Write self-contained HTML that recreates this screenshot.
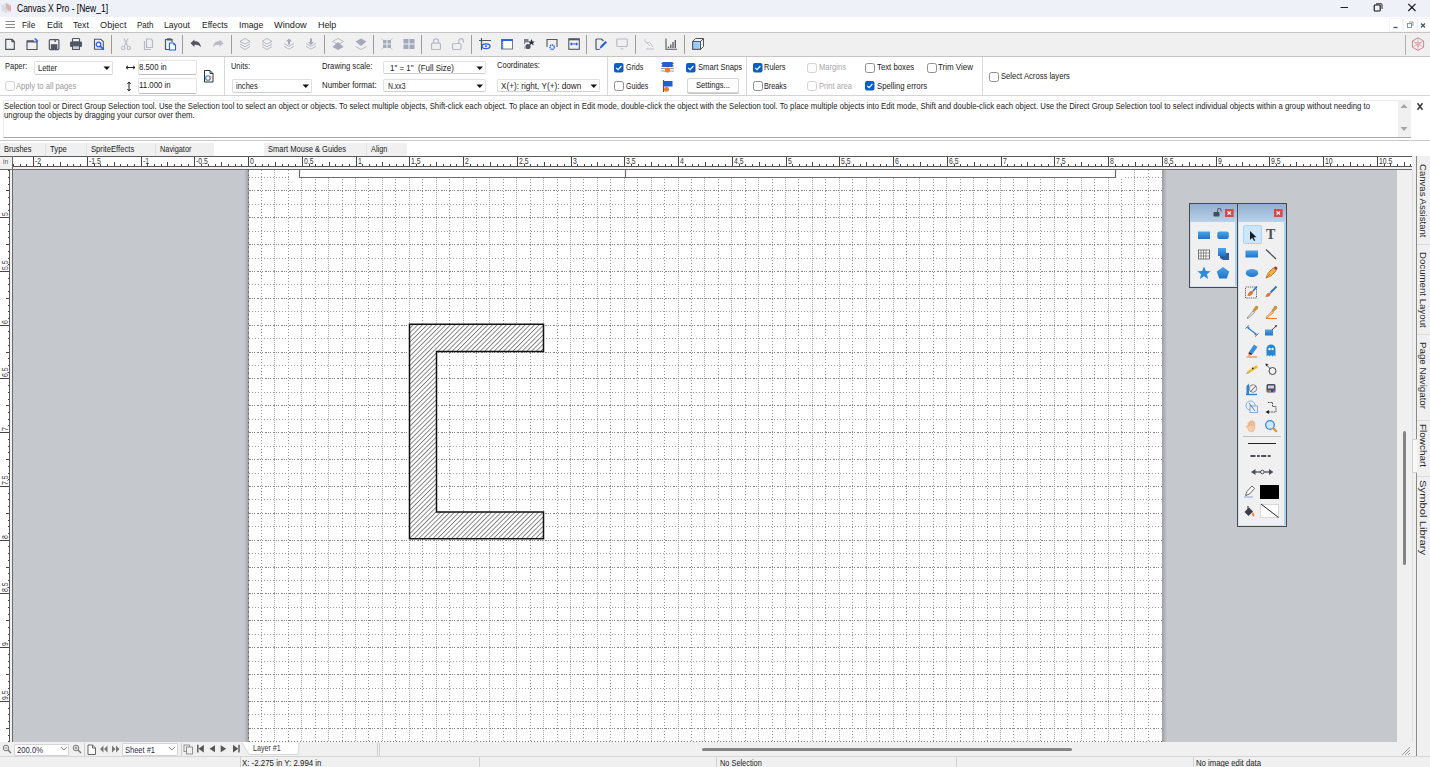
<!DOCTYPE html><html><head><meta charset="utf-8"><style>
html,body{margin:0;padding:0;width:1430px;height:767px;overflow:hidden;background:#fff;position:relative}
.t{position:absolute;white-space:pre;line-height:1;transform-origin:0 0}
svg{position:absolute;overflow:visible}
</style></head><body>
<div style="position:absolute;left:0px;top:0px;width:1430px;height:17px;background:#eef2f8;"></div>
<div class="t" style="left:17px;top:4.17px;font-size:10.2px;color:#000;font-family:'Liberation Sans';font-weight:normal;transform:scaleX(0.8327);">Canvas X Pro - [New_1]</div>
<div style="position:absolute;left:0px;top:17px;width:1430px;height:15px;background:#ffffff;"></div>
<div class="t" style="left:22px;top:19.96px;font-size:9.5px;color:#1a1a1a;font-family:'Liberation Sans';font-weight:normal;transform:scaleX(0.8686);">File</div>
<div class="t" style="left:46.6px;top:19.96px;font-size:9.5px;color:#1a1a1a;font-family:'Liberation Sans';font-weight:normal;transform:scaleX(0.9405);">Edit</div>
<div class="t" style="left:73px;top:19.96px;font-size:9.5px;color:#1a1a1a;font-family:'Liberation Sans';font-weight:normal;transform:scaleX(0.9061);">Text</div>
<div class="t" style="left:99.5px;top:19.96px;font-size:9.5px;color:#1a1a1a;font-family:'Liberation Sans';font-weight:normal;transform:scaleX(0.9647);">Object</div>
<div class="t" style="left:136.6px;top:19.96px;font-size:9.5px;color:#1a1a1a;font-family:'Liberation Sans';font-weight:normal;transform:scaleX(0.8390);">Path</div>
<div class="t" style="left:164.4px;top:19.96px;font-size:9.5px;color:#1a1a1a;font-family:'Liberation Sans';font-weight:normal;transform:scaleX(0.9043);">Layout</div>
<div class="t" style="left:201.6px;top:19.96px;font-size:9.5px;color:#1a1a1a;font-family:'Liberation Sans';font-weight:normal;transform:scaleX(0.8935);">Effects</div>
<div class="t" style="left:238.7px;top:19.96px;font-size:9.5px;color:#1a1a1a;font-family:'Liberation Sans';font-weight:normal;transform:scaleX(0.9202);">Image</div>
<div class="t" style="left:274px;top:19.96px;font-size:9.5px;color:#1a1a1a;font-family:'Liberation Sans';font-weight:normal;transform:scaleX(0.9675);">Window</div>
<div class="t" style="left:318px;top:19.96px;font-size:9.5px;color:#1a1a1a;font-family:'Liberation Sans';font-weight:normal;transform:scaleX(0.9362);">Help</div>
<div style="position:absolute;left:0px;top:32px;width:1430px;height:1px;background:#c4c4c4;"></div>
<div style="position:absolute;left:0px;top:33px;width:1430px;height:23px;background:#f0f0f0;"></div>
<div style="position:absolute;left:0px;top:56px;width:1430px;height:1px;background:#c4c4c4;"></div>
<div style="position:absolute;left:0px;top:57px;width:1430px;height:38px;background:#ffffff;"></div>
<div style="position:absolute;left:0px;top:95px;width:1430px;height:1px;background:#d4d4d4;"></div>
<div style="position:absolute;left:0px;top:96px;width:1430px;height:45px;background:#ffffff;"></div>
<div style="position:absolute;left:3px;top:99.5px;width:1408px;height:38px;background:#ffffff;box-sizing:border-box;border-left:1px solid #ececec;border-top:1px solid #ececec;border-bottom:1px solid #a9a9a9"></div>
<div style="position:absolute;left:0px;top:140px;width:1430px;height:1px;background:#c8c8c8;"></div>
<div style="position:absolute;left:0px;top:143px;width:214px;height:13px;background:#f0f0f0;"></div>
<div style="position:absolute;left:264px;top:143px;width:143px;height:13px;background:#f0f0f0;"></div>
<div style="position:absolute;left:0px;top:156px;width:1412px;height:13px;background:#ffffff;"></div>
<div style="position:absolute;left:0px;top:169px;width:1412px;height:573px;background:#c4c7cc;"></div>
<div style="position:absolute;left:0px;top:169px;width:10px;height:573px;background:#ffffff;"></div>
<div style="position:absolute;left:249px;top:170px;width:913px;height:572px;background:#ffffff;"></div>
<div style="position:absolute;left:1397px;top:156px;width:15px;height:586px;background:#f0f0f0;"></div>
<div style="position:absolute;left:1412px;top:156px;width:18px;height:600px;background:#f0f0f0;"></div>
<div style="position:absolute;left:1416px;top:156px;width:1px;height:600px;background:#8a8a8a;"></div>
<div style="position:absolute;left:0px;top:742px;width:1412px;height:14px;background:#f0f0f0;"></div>
<div style="position:absolute;left:0px;top:756px;width:1430px;height:11px;background:#f0f0f0;"></div>
<div style="position:absolute;left:0px;top:756px;width:1430px;height:1px;background:#d0d0d0;"></div>
<div style="position:absolute;left:13px;top:170px;width:1384px;height:572px;background:#c5c8cd;"></div>
<div style="position:absolute;left:244px;top:170px;width:5px;height:572px;background:linear-gradient(90deg,#c5c8cd,#9a9da2);"></div>
<div style="position:absolute;left:1162px;top:170px;width:5px;height:572px;background:linear-gradient(90deg,#9a9da2,#c5c8cd);"></div>
<div style="position:absolute;left:249px;top:170px;width:913px;height:572px;background:#ffffff;"></div>
<svg style="left:0;top:0" width="1430" height="767"><line x1="261.5" y1="170" x2="261.5" y2="742" stroke="#929292" stroke-dasharray="1 2"/><line x1="274.5" y1="170" x2="274.5" y2="742" stroke="#a6a6a6" stroke-dasharray="1 1"/><line x1="288.5" y1="170" x2="288.5" y2="742" stroke="#929292" stroke-dasharray="1 2"/><line x1="301.5" y1="170" x2="301.5" y2="742" stroke="#a6a6a6" stroke-dasharray="1 1"/><line x1="315.5" y1="170" x2="315.5" y2="742" stroke="#929292" stroke-dasharray="1 2"/><line x1="328.5" y1="170" x2="328.5" y2="742" stroke="#a6a6a6" stroke-dasharray="1 1"/><line x1="342.5" y1="170" x2="342.5" y2="742" stroke="#929292" stroke-dasharray="1 2"/><line x1="355.5" y1="170" x2="355.5" y2="742" stroke="#a6a6a6" stroke-dasharray="1 1"/><line x1="368.5" y1="170" x2="368.5" y2="742" stroke="#929292" stroke-dasharray="1 2"/><line x1="382.5" y1="170" x2="382.5" y2="742" stroke="#a6a6a6" stroke-dasharray="1 1"/><line x1="395.5" y1="170" x2="395.5" y2="742" stroke="#929292" stroke-dasharray="1 2"/><line x1="409.5" y1="170" x2="409.5" y2="742" stroke="#a6a6a6" stroke-dasharray="1 1"/><line x1="422.5" y1="170" x2="422.5" y2="742" stroke="#929292" stroke-dasharray="1 2"/><line x1="436.5" y1="170" x2="436.5" y2="742" stroke="#a6a6a6" stroke-dasharray="1 1"/><line x1="449.5" y1="170" x2="449.5" y2="742" stroke="#929292" stroke-dasharray="1 2"/><line x1="463.5" y1="170" x2="463.5" y2="742" stroke="#a6a6a6" stroke-dasharray="1 1"/><line x1="476.5" y1="170" x2="476.5" y2="742" stroke="#929292" stroke-dasharray="1 2"/><line x1="489.5" y1="170" x2="489.5" y2="742" stroke="#a6a6a6" stroke-dasharray="1 1"/><line x1="503.5" y1="170" x2="503.5" y2="742" stroke="#929292" stroke-dasharray="1 2"/><line x1="516.5" y1="170" x2="516.5" y2="742" stroke="#a6a6a6" stroke-dasharray="1 1"/><line x1="530.5" y1="170" x2="530.5" y2="742" stroke="#929292" stroke-dasharray="1 2"/><line x1="543.5" y1="170" x2="543.5" y2="742" stroke="#a6a6a6" stroke-dasharray="1 1"/><line x1="557.5" y1="170" x2="557.5" y2="742" stroke="#929292" stroke-dasharray="1 2"/><line x1="570.5" y1="170" x2="570.5" y2="742" stroke="#a6a6a6" stroke-dasharray="1 1"/><line x1="583.5" y1="170" x2="583.5" y2="742" stroke="#929292" stroke-dasharray="1 2"/><line x1="597.5" y1="170" x2="597.5" y2="742" stroke="#a6a6a6" stroke-dasharray="1 1"/><line x1="610.5" y1="170" x2="610.5" y2="742" stroke="#929292" stroke-dasharray="1 2"/><line x1="624.5" y1="170" x2="624.5" y2="742" stroke="#a6a6a6" stroke-dasharray="1 1"/><line x1="637.5" y1="170" x2="637.5" y2="742" stroke="#929292" stroke-dasharray="1 2"/><line x1="651.5" y1="170" x2="651.5" y2="742" stroke="#a6a6a6" stroke-dasharray="1 1"/><line x1="664.5" y1="170" x2="664.5" y2="742" stroke="#929292" stroke-dasharray="1 2"/><line x1="678.5" y1="170" x2="678.5" y2="742" stroke="#a6a6a6" stroke-dasharray="1 1"/><line x1="691.5" y1="170" x2="691.5" y2="742" stroke="#929292" stroke-dasharray="1 2"/><line x1="704.5" y1="170" x2="704.5" y2="742" stroke="#a6a6a6" stroke-dasharray="1 1"/><line x1="718.5" y1="170" x2="718.5" y2="742" stroke="#929292" stroke-dasharray="1 2"/><line x1="731.5" y1="170" x2="731.5" y2="742" stroke="#a6a6a6" stroke-dasharray="1 1"/><line x1="745.5" y1="170" x2="745.5" y2="742" stroke="#929292" stroke-dasharray="1 2"/><line x1="758.5" y1="170" x2="758.5" y2="742" stroke="#a6a6a6" stroke-dasharray="1 1"/><line x1="772.5" y1="170" x2="772.5" y2="742" stroke="#929292" stroke-dasharray="1 2"/><line x1="785.5" y1="170" x2="785.5" y2="742" stroke="#a6a6a6" stroke-dasharray="1 1"/><line x1="798.5" y1="170" x2="798.5" y2="742" stroke="#929292" stroke-dasharray="1 2"/><line x1="812.5" y1="170" x2="812.5" y2="742" stroke="#a6a6a6" stroke-dasharray="1 1"/><line x1="825.5" y1="170" x2="825.5" y2="742" stroke="#929292" stroke-dasharray="1 2"/><line x1="839.5" y1="170" x2="839.5" y2="742" stroke="#a6a6a6" stroke-dasharray="1 1"/><line x1="852.5" y1="170" x2="852.5" y2="742" stroke="#929292" stroke-dasharray="1 2"/><line x1="866.5" y1="170" x2="866.5" y2="742" stroke="#a6a6a6" stroke-dasharray="1 1"/><line x1="879.5" y1="170" x2="879.5" y2="742" stroke="#929292" stroke-dasharray="1 2"/><line x1="893.5" y1="170" x2="893.5" y2="742" stroke="#a6a6a6" stroke-dasharray="1 1"/><line x1="906.5" y1="170" x2="906.5" y2="742" stroke="#929292" stroke-dasharray="1 2"/><line x1="919.5" y1="170" x2="919.5" y2="742" stroke="#a6a6a6" stroke-dasharray="1 1"/><line x1="933.5" y1="170" x2="933.5" y2="742" stroke="#929292" stroke-dasharray="1 2"/><line x1="946.5" y1="170" x2="946.5" y2="742" stroke="#a6a6a6" stroke-dasharray="1 1"/><line x1="960.5" y1="170" x2="960.5" y2="742" stroke="#929292" stroke-dasharray="1 2"/><line x1="973.5" y1="170" x2="973.5" y2="742" stroke="#a6a6a6" stroke-dasharray="1 1"/><line x1="987.5" y1="170" x2="987.5" y2="742" stroke="#929292" stroke-dasharray="1 2"/><line x1="1000.5" y1="170" x2="1000.5" y2="742" stroke="#a6a6a6" stroke-dasharray="1 1"/><line x1="1013.5" y1="170" x2="1013.5" y2="742" stroke="#929292" stroke-dasharray="1 2"/><line x1="1027.5" y1="170" x2="1027.5" y2="742" stroke="#a6a6a6" stroke-dasharray="1 1"/><line x1="1040.5" y1="170" x2="1040.5" y2="742" stroke="#929292" stroke-dasharray="1 2"/><line x1="1054.5" y1="170" x2="1054.5" y2="742" stroke="#a6a6a6" stroke-dasharray="1 1"/><line x1="1067.5" y1="170" x2="1067.5" y2="742" stroke="#929292" stroke-dasharray="1 2"/><line x1="1081.5" y1="170" x2="1081.5" y2="742" stroke="#a6a6a6" stroke-dasharray="1 1"/><line x1="1094.5" y1="170" x2="1094.5" y2="742" stroke="#929292" stroke-dasharray="1 2"/><line x1="1108.5" y1="170" x2="1108.5" y2="742" stroke="#a6a6a6" stroke-dasharray="1 1"/><line x1="1121.5" y1="170" x2="1121.5" y2="742" stroke="#929292" stroke-dasharray="1 2"/><line x1="1134.5" y1="170" x2="1134.5" y2="742" stroke="#a6a6a6" stroke-dasharray="1 1"/><line x1="1148.5" y1="170" x2="1148.5" y2="742" stroke="#929292" stroke-dasharray="1 2"/><line x1="249" y1="177.5" x2="1162" y2="177.5" stroke="#9c9c9c" stroke-dasharray="1 2"/><line x1="249" y1="190.5" x2="1162" y2="190.5" stroke="#888888" stroke-dasharray="2 1 1 1 1 2"/><line x1="249" y1="204.5" x2="1162" y2="204.5" stroke="#9c9c9c" stroke-dasharray="1 2"/><line x1="249" y1="217.5" x2="1162" y2="217.5" stroke="#888888" stroke-dasharray="2 1 1 1 1 2"/><line x1="249" y1="231.5" x2="1162" y2="231.5" stroke="#9c9c9c" stroke-dasharray="1 2"/><line x1="249" y1="244.5" x2="1162" y2="244.5" stroke="#888888" stroke-dasharray="2 1 1 1 1 2"/><line x1="249" y1="258.5" x2="1162" y2="258.5" stroke="#9c9c9c" stroke-dasharray="1 2"/><line x1="249" y1="271.5" x2="1162" y2="271.5" stroke="#888888" stroke-dasharray="2 1 1 1 1 2"/><line x1="249" y1="284.5" x2="1162" y2="284.5" stroke="#9c9c9c" stroke-dasharray="1 2"/><line x1="249" y1="298.5" x2="1162" y2="298.5" stroke="#888888" stroke-dasharray="2 1 1 1 1 2"/><line x1="249" y1="311.5" x2="1162" y2="311.5" stroke="#9c9c9c" stroke-dasharray="1 2"/><line x1="249" y1="325.5" x2="1162" y2="325.5" stroke="#888888" stroke-dasharray="2 1 1 1 1 2"/><line x1="249" y1="338.5" x2="1162" y2="338.5" stroke="#9c9c9c" stroke-dasharray="1 2"/><line x1="249" y1="352.5" x2="1162" y2="352.5" stroke="#888888" stroke-dasharray="2 1 1 1 1 2"/><line x1="249" y1="365.5" x2="1162" y2="365.5" stroke="#9c9c9c" stroke-dasharray="1 2"/><line x1="249" y1="378.5" x2="1162" y2="378.5" stroke="#888888" stroke-dasharray="2 1 1 1 1 2"/><line x1="249" y1="392.5" x2="1162" y2="392.5" stroke="#9c9c9c" stroke-dasharray="1 2"/><line x1="249" y1="405.5" x2="1162" y2="405.5" stroke="#888888" stroke-dasharray="2 1 1 1 1 2"/><line x1="249" y1="419.5" x2="1162" y2="419.5" stroke="#9c9c9c" stroke-dasharray="1 2"/><line x1="249" y1="432.5" x2="1162" y2="432.5" stroke="#888888" stroke-dasharray="2 1 1 1 1 2"/><line x1="249" y1="446.5" x2="1162" y2="446.5" stroke="#9c9c9c" stroke-dasharray="1 2"/><line x1="249" y1="459.5" x2="1162" y2="459.5" stroke="#888888" stroke-dasharray="2 1 1 1 1 2"/><line x1="249" y1="473.5" x2="1162" y2="473.5" stroke="#9c9c9c" stroke-dasharray="1 2"/><line x1="249" y1="486.5" x2="1162" y2="486.5" stroke="#888888" stroke-dasharray="2 1 1 1 1 2"/><line x1="249" y1="499.5" x2="1162" y2="499.5" stroke="#9c9c9c" stroke-dasharray="1 2"/><line x1="249" y1="513.5" x2="1162" y2="513.5" stroke="#888888" stroke-dasharray="2 1 1 1 1 2"/><line x1="249" y1="526.5" x2="1162" y2="526.5" stroke="#9c9c9c" stroke-dasharray="1 2"/><line x1="249" y1="540.5" x2="1162" y2="540.5" stroke="#888888" stroke-dasharray="2 1 1 1 1 2"/><line x1="249" y1="553.5" x2="1162" y2="553.5" stroke="#9c9c9c" stroke-dasharray="1 2"/><line x1="249" y1="567.5" x2="1162" y2="567.5" stroke="#888888" stroke-dasharray="2 1 1 1 1 2"/><line x1="249" y1="580.5" x2="1162" y2="580.5" stroke="#9c9c9c" stroke-dasharray="1 2"/><line x1="249" y1="593.5" x2="1162" y2="593.5" stroke="#888888" stroke-dasharray="2 1 1 1 1 2"/><line x1="249" y1="607.5" x2="1162" y2="607.5" stroke="#9c9c9c" stroke-dasharray="1 2"/><line x1="249" y1="620.5" x2="1162" y2="620.5" stroke="#888888" stroke-dasharray="2 1 1 1 1 2"/><line x1="249" y1="634.5" x2="1162" y2="634.5" stroke="#9c9c9c" stroke-dasharray="1 2"/><line x1="249" y1="647.5" x2="1162" y2="647.5" stroke="#888888" stroke-dasharray="2 1 1 1 1 2"/><line x1="249" y1="661.5" x2="1162" y2="661.5" stroke="#9c9c9c" stroke-dasharray="1 2"/><line x1="249" y1="674.5" x2="1162" y2="674.5" stroke="#888888" stroke-dasharray="2 1 1 1 1 2"/><line x1="249" y1="688.5" x2="1162" y2="688.5" stroke="#9c9c9c" stroke-dasharray="1 2"/><line x1="249" y1="701.5" x2="1162" y2="701.5" stroke="#888888" stroke-dasharray="2 1 1 1 1 2"/><line x1="249" y1="714.5" x2="1162" y2="714.5" stroke="#9c9c9c" stroke-dasharray="1 2"/><line x1="249" y1="728.5" x2="1162" y2="728.5" stroke="#888888" stroke-dasharray="2 1 1 1 1 2"/><line x1="249" y1="741.5" x2="1162" y2="741.5" stroke="#9c9c9c" stroke-dasharray="1 2"/></svg>
<div style="position:absolute;left:289px;top:170px;width:836px;height:8px;background:#ffffff;"></div>
<svg style="left:0;top:0" width="1430" height="767"><line x1="248.5" y1="170" x2="248.5" y2="742" stroke="#666" stroke-dasharray="1.5 3"/></svg>
<svg style="left:0;top:0" width="1430" height="767"><path d="M299.5 170 V177.5 H1115.5 V170 M625.5 170 V177" fill="none" stroke="#6e6e6e" stroke-width="1.2"/></svg>
<svg style="left:0;top:0" width="1430" height="767"><defs><pattern id="hatch" patternUnits="userSpaceOnUse" width="3.3" height="3.3" patternTransform="rotate(45)"><rect width="3.3" height="3.3" fill="#fff"/><line x1="0.5" y1="0" x2="0.5" y2="3.3" stroke="#6a6a6a" stroke-width="0.8"/></pattern></defs>
<path d="M409.5 324.3 H543.5 V351.5 H436.5 V512 H543.5 V538.8 H409.5 Z" fill="url(#hatch)" stroke="#111" stroke-width="1.5"/></svg>
<div style="position:absolute;left:0px;top:156px;width:1412px;height:1px;background:#5a5a5a;"></div>
<div style="position:absolute;left:0px;top:157px;width:13px;height:12px;background:#f0f0f0;"></div>
<div class="t" style="left:3px;top:159.00px;font-size:6.5px;color:#555;font-family:'Liberation Sans';font-weight:normal;">in</div>
<div style="position:absolute;left:12px;top:156px;width:1px;height:611px;background:#6a6a6a;"></div>
<div style="position:absolute;left:13px;top:157px;width:1399px;height:10px;background:#ffffff;"></div>
<div style="position:absolute;left:13px;top:166px;width:1399px;height:1px;background:#555555;"></div>
<div style="position:absolute;left:13px;top:167px;width:1399px;height:2px;background:#f0f0f0;"></div>
<div style="position:absolute;left:0px;top:169px;width:1412px;height:1px;background:#6e6e6e;"></div>
<svg style="left:0;top:0" width="1430" height="767"><path d="M13.5 164V166M20.5 164V166M26.5 164V166M33.5 157V166M40.5 164V166M47.5 164V166M53.5 164V166M60.5 162V166M67.5 164V166M73.5 164V166M80.5 164V166M87.5 157V166M94.5 164V166M100.5 164V166M107.5 164V166M114.5 162V166M120.5 164V166M127.5 164V166M134.5 164V166M141.5 157V166M147.5 164V166M154.5 164V166M161.5 164V166M167.5 162V166M174.5 164V166M181.5 164V166M188.5 164V166M194.5 157V166M201.5 164V166M208.5 164V166M215.5 164V166M221.5 162V166M228.5 164V166M235.5 164V166M241.5 164V166M248.5 157V166M255.5 164V166M262.5 164V166M268.5 164V166M275.5 162V166M282.5 164V166M288.5 164V166M295.5 164V166M302.5 157V166M309.5 164V166M315.5 164V166M322.5 164V166M329.5 162V166M335.5 164V166M342.5 164V166M349.5 164V166M356.5 157V166M362.5 164V166M369.5 164V166M376.5 164V166M382.5 162V166M389.5 164V166M396.5 164V166M403.5 164V166M409.5 157V166M416.5 164V166M423.5 164V166M430.5 164V166M436.5 162V166M443.5 164V166M450.5 164V166M456.5 164V166M463.5 157V166M470.5 164V166M477.5 164V166M483.5 164V166M490.5 162V166M497.5 164V166M503.5 164V166M510.5 164V166M517.5 157V166M524.5 164V166M530.5 164V166M537.5 164V166M544.5 162V166M550.5 164V166M557.5 164V166M564.5 164V166M571.5 157V166M577.5 164V166M584.5 164V166M591.5 164V166M597.5 162V166M604.5 164V166M611.5 164V166M618.5 164V166M624.5 157V166M631.5 164V166M638.5 164V166M645.5 164V166M651.5 162V166M658.5 164V166M665.5 164V166M671.5 164V166M678.5 157V166M685.5 164V166M692.5 164V166M698.5 164V166M705.5 162V166M712.5 164V166M718.5 164V166M725.5 164V166M732.5 157V166M739.5 164V166M745.5 164V166M752.5 164V166M759.5 162V166M765.5 164V166M772.5 164V166M779.5 164V166M786.5 157V166M792.5 164V166M799.5 164V166M806.5 164V166M812.5 162V166M819.5 164V166M826.5 164V166M833.5 164V166M839.5 157V166M846.5 164V166M853.5 164V166M860.5 164V166M866.5 162V166M873.5 164V166M880.5 164V166M886.5 164V166M893.5 157V166M900.5 164V166M907.5 164V166M913.5 164V166M920.5 162V166M927.5 164V166M933.5 164V166M940.5 164V166M947.5 157V166M954.5 164V166M960.5 164V166M967.5 164V166M974.5 162V166M980.5 164V166M987.5 164V166M994.5 164V166M1001.5 157V166M1007.5 164V166M1014.5 164V166M1021.5 164V166M1027.5 162V166M1034.5 164V166M1041.5 164V166M1048.5 164V166M1054.5 157V166M1061.5 164V166M1068.5 164V166M1075.5 164V166M1081.5 162V166M1088.5 164V166M1095.5 164V166M1101.5 164V166M1108.5 157V166M1115.5 164V166M1122.5 164V166M1128.5 164V166M1135.5 162V166M1142.5 164V166M1148.5 164V166M1155.5 164V166M1162.5 157V166M1169.5 164V166M1175.5 164V166M1182.5 164V166M1189.5 162V166M1195.5 164V166M1202.5 164V166M1209.5 164V166M1216.5 157V166M1222.5 164V166M1229.5 164V166M1236.5 164V166M1242.5 162V166M1249.5 164V166M1256.5 164V166M1263.5 164V166M1269.5 157V166M1276.5 164V166M1283.5 164V166M1290.5 164V166M1296.5 162V166M1303.5 164V166M1310.5 164V166M1316.5 164V166M1323.5 157V166M1330.5 164V166M1337.5 164V166M1343.5 164V166M1350.5 162V166M1357.5 164V166M1363.5 164V166M1370.5 164V166M1377.5 157V166M1384.5 164V166M1390.5 164V166M1397.5 164V166M1404.5 162V166M1410.5 164V166" stroke="#444" stroke-width="1"/></svg>
<div class="t" style="left:34.5px;top:157.09px;font-size:8.4px;color:#333;font-family:'Liberation Sans';font-weight:normal;transform:scaleX(0.82)">-2</div>
<div class="t" style="left:88.5px;top:157.09px;font-size:8.4px;color:#333;font-family:'Liberation Sans';font-weight:normal;transform:scaleX(0.82)">-1.5</div>
<div class="t" style="left:142.5px;top:157.09px;font-size:8.4px;color:#333;font-family:'Liberation Sans';font-weight:normal;transform:scaleX(0.82)">-1</div>
<div class="t" style="left:195.5px;top:157.09px;font-size:8.4px;color:#333;font-family:'Liberation Sans';font-weight:normal;transform:scaleX(0.82)">-0.5</div>
<div class="t" style="left:249.5px;top:157.09px;font-size:8.4px;color:#333;font-family:'Liberation Sans';font-weight:normal;transform:scaleX(0.82)">0</div>
<div class="t" style="left:303.5px;top:157.09px;font-size:8.4px;color:#333;font-family:'Liberation Sans';font-weight:normal;transform:scaleX(0.82)">0.5</div>
<div class="t" style="left:357.5px;top:157.09px;font-size:8.4px;color:#333;font-family:'Liberation Sans';font-weight:normal;transform:scaleX(0.82)">1</div>
<div class="t" style="left:410.5px;top:157.09px;font-size:8.4px;color:#333;font-family:'Liberation Sans';font-weight:normal;transform:scaleX(0.82)">1.5</div>
<div class="t" style="left:464.5px;top:157.09px;font-size:8.4px;color:#333;font-family:'Liberation Sans';font-weight:normal;transform:scaleX(0.82)">2</div>
<div class="t" style="left:518.5px;top:157.09px;font-size:8.4px;color:#333;font-family:'Liberation Sans';font-weight:normal;transform:scaleX(0.82)">2.5</div>
<div class="t" style="left:572.5px;top:157.09px;font-size:8.4px;color:#333;font-family:'Liberation Sans';font-weight:normal;transform:scaleX(0.82)">3</div>
<div class="t" style="left:625.5px;top:157.09px;font-size:8.4px;color:#333;font-family:'Liberation Sans';font-weight:normal;transform:scaleX(0.82)">3.5</div>
<div class="t" style="left:679.5px;top:157.09px;font-size:8.4px;color:#333;font-family:'Liberation Sans';font-weight:normal;transform:scaleX(0.82)">4</div>
<div class="t" style="left:733.5px;top:157.09px;font-size:8.4px;color:#333;font-family:'Liberation Sans';font-weight:normal;transform:scaleX(0.82)">4.5</div>
<div class="t" style="left:787.5px;top:157.09px;font-size:8.4px;color:#333;font-family:'Liberation Sans';font-weight:normal;transform:scaleX(0.82)">5</div>
<div class="t" style="left:840.5px;top:157.09px;font-size:8.4px;color:#333;font-family:'Liberation Sans';font-weight:normal;transform:scaleX(0.82)">5.5</div>
<div class="t" style="left:894.5px;top:157.09px;font-size:8.4px;color:#333;font-family:'Liberation Sans';font-weight:normal;transform:scaleX(0.82)">6</div>
<div class="t" style="left:948.5px;top:157.09px;font-size:8.4px;color:#333;font-family:'Liberation Sans';font-weight:normal;transform:scaleX(0.82)">6.5</div>
<div class="t" style="left:1002.5px;top:157.09px;font-size:8.4px;color:#333;font-family:'Liberation Sans';font-weight:normal;transform:scaleX(0.82)">7</div>
<div class="t" style="left:1055.5px;top:157.09px;font-size:8.4px;color:#333;font-family:'Liberation Sans';font-weight:normal;transform:scaleX(0.82)">7.5</div>
<div class="t" style="left:1109.5px;top:157.09px;font-size:8.4px;color:#333;font-family:'Liberation Sans';font-weight:normal;transform:scaleX(0.82)">8</div>
<div class="t" style="left:1163.5px;top:157.09px;font-size:8.4px;color:#333;font-family:'Liberation Sans';font-weight:normal;transform:scaleX(0.82)">8.5</div>
<div class="t" style="left:1217.5px;top:157.09px;font-size:8.4px;color:#333;font-family:'Liberation Sans';font-weight:normal;transform:scaleX(0.82)">9</div>
<div class="t" style="left:1270.5px;top:157.09px;font-size:8.4px;color:#333;font-family:'Liberation Sans';font-weight:normal;transform:scaleX(0.82)">9.5</div>
<div class="t" style="left:1324.5px;top:157.09px;font-size:8.4px;color:#333;font-family:'Liberation Sans';font-weight:normal;transform:scaleX(0.82)">10</div>
<div class="t" style="left:1378.5px;top:157.09px;font-size:8.4px;color:#333;font-family:'Liberation Sans';font-weight:normal;transform:scaleX(0.82)">10.5</div>
<div style="position:absolute;left:0px;top:170px;width:10px;height:572px;background:#ffffff;"></div>
<div style="position:absolute;left:9px;top:170px;width:1px;height:572px;background:#5a5a5a;"></div>
<div style="position:absolute;left:10px;top:170px;width:2px;height:572px;background:#f0f0f0;"></div>
<svg style="left:0;top:0" width="1430" height="767"><path d="M8 170.5H9M8 177.5H9M8 184.5H9M6 190.5H9M8 197.5H9M8 204.5H9M8 210.5H9M0 217.5H9M8 224.5H9M8 231.5H9M8 237.5H9M6 244.5H9M8 251.5H9M8 258.5H9M8 264.5H9M0 271.5H9M8 278.5H9M8 284.5H9M8 291.5H9M6 298.5H9M8 305.5H9M8 311.5H9M8 318.5H9M0 325.5H9M8 331.5H9M8 338.5H9M8 345.5H9M6 352.5H9M8 358.5H9M8 365.5H9M8 372.5H9M0 378.5H9M8 385.5H9M8 392.5H9M8 399.5H9M6 405.5H9M8 412.5H9M8 419.5H9M8 425.5H9M0 432.5H9M8 439.5H9M8 446.5H9M8 452.5H9M6 459.5H9M8 466.5H9M8 473.5H9M8 479.5H9M0 486.5H9M8 493.5H9M8 499.5H9M8 506.5H9M6 513.5H9M8 520.5H9M8 526.5H9M8 533.5H9M0 540.5H9M8 546.5H9M8 553.5H9M8 560.5H9M6 567.5H9M8 573.5H9M8 580.5H9M8 587.5H9M0 593.5H9M8 600.5H9M8 607.5H9M8 614.5H9M6 620.5H9M8 627.5H9M8 634.5H9M8 640.5H9M0 647.5H9M8 654.5H9M8 661.5H9M8 667.5H9M6 674.5H9M8 681.5H9M8 688.5H9M8 694.5H9M0 701.5H9M8 708.5H9M8 714.5H9M8 721.5H9M6 728.5H9M8 735.5H9M8 741.5H9" stroke="#444" stroke-width="1"/></svg>
<div class="t" style="left:0.5px;top:215.8px;font-size:8.4px;color:#333;font-family:Liberation Sans;transform:rotate(-90deg) scaleX(0.82)">5</div>
<div class="t" style="left:0.5px;top:269.8px;font-size:8.4px;color:#333;font-family:Liberation Sans;transform:rotate(-90deg) scaleX(0.82)">5.5</div>
<div class="t" style="left:0.5px;top:323.8px;font-size:8.4px;color:#333;font-family:Liberation Sans;transform:rotate(-90deg) scaleX(0.82)">6</div>
<div class="t" style="left:0.5px;top:376.8px;font-size:8.4px;color:#333;font-family:Liberation Sans;transform:rotate(-90deg) scaleX(0.82)">6.5</div>
<div class="t" style="left:0.5px;top:430.8px;font-size:8.4px;color:#333;font-family:Liberation Sans;transform:rotate(-90deg) scaleX(0.82)">7</div>
<div class="t" style="left:0.5px;top:484.8px;font-size:8.4px;color:#333;font-family:Liberation Sans;transform:rotate(-90deg) scaleX(0.82)">7.5</div>
<div class="t" style="left:0.5px;top:538.8px;font-size:8.4px;color:#333;font-family:Liberation Sans;transform:rotate(-90deg) scaleX(0.82)">8</div>
<div class="t" style="left:0.5px;top:591.8px;font-size:8.4px;color:#333;font-family:Liberation Sans;transform:rotate(-90deg) scaleX(0.82)">8.5</div>
<div class="t" style="left:0.5px;top:645.8px;font-size:8.4px;color:#333;font-family:Liberation Sans;transform:rotate(-90deg) scaleX(0.82)">9</div>
<div class="t" style="left:0.5px;top:699.8px;font-size:8.4px;color:#333;font-family:Liberation Sans;transform:rotate(-90deg) scaleX(0.82)">9.5</div>
<div class="t" style="left:5px;top:61.72px;font-size:8.6px;color:#1a1a1a;font-family:'Liberation Sans';font-weight:normal;transform:scaleX(0.8686);">Paper:</div>
<div style="position:absolute;left:33.5px;top:60.5px;width:79.5px;height:14.0px;background:#fff;box-sizing:border-box;border:1px solid #e0e0e0;border-bottom-color:#cfcfcf;border-radius:2px"></div>
<svg style="left:103px;top:66.0px" width="8" height="5"><path d="M0.5 0.5 H7 L3.75 4 Z" fill="#111"/></svg>
<div class="t" style="left:37.8px;top:63.52px;font-size:8.6px;color:#1a1a1a;font-family:'Liberation Sans';font-weight:normal;transform:scaleX(0.8643);">Letter</div>
<svg style="left:125px;top:64px" width="12" height="8"><path d="M1 3.5H10M1 3.5L3 1.8M1 3.5L3 5.2M10 3.5L8 1.8M10 3.5L8 5.2" stroke="#222" stroke-width="1" fill="none"/></svg>
<svg style="left:125px;top:81px" width="8" height="12"><path d="M4 1V10M4 1L2.3 3M4 1L5.7 3M4 10L2.3 8M4 10L5.7 8" stroke="#222" stroke-width="1" fill="none"/></svg>
<div style="position:absolute;left:138px;top:60px;width:59px;height:15px;background:#fff;box-sizing:border-box;border:1px solid #e3e3e3;border-bottom:1px solid #bdbdbd;border-radius:2px"></div>
<div style="position:absolute;left:138px;top:78px;width:59px;height:15.5px;background:#fff;box-sizing:border-box;border:1px solid #e3e3e3;border-bottom:1px solid #bdbdbd;border-radius:2px"></div>
<div class="t" style="left:139.3px;top:63.02px;font-size:8.6px;color:#1a1a1a;font-family:'Liberation Sans';font-weight:normal;transform:scaleX(0.9054);">8.500 in</div>
<div class="t" style="left:139.3px;top:81.22px;font-size:8.6px;color:#1a1a1a;font-family:'Liberation Sans';font-weight:normal;transform:scaleX(0.9126);">11.000 in</div>
<svg style="left:203px;top:69px" width="12" height="15"><path d="M1.5 1.5H7L10 4.5V13H1.5Z" fill="#fff" stroke="#333" stroke-width="1"/><path d="M7 1.5V4.5H10" fill="none" stroke="#333"/><circle cx="5" cy="9" r="2.3" fill="none" stroke="#2f7fd8" stroke-width="1.1"/><circle cx="7.3" cy="8.5" r="1" fill="#e8772e"/></svg>
<svg style="left:5px;top:81.3px" width="10" height="10"><rect x="0.5" y="0.5" width="9" height="9" rx="2" fill="#fdfdfd" stroke="#d2d2d2" stroke-width="1"/></svg>
<div class="t" style="left:16px;top:81.72px;font-size:8.6px;color:#9a9a9a;font-family:'Liberation Sans';font-weight:normal;transform:scaleX(0.8888);">Apply to all pages</div>
<div style="position:absolute;left:224px;top:57px;width:1px;height:38px;background:#d8d8d8;"></div>
<div class="t" style="left:231px;top:61.62px;font-size:8.6px;color:#1a1a1a;font-family:'Liberation Sans';font-weight:normal;transform:scaleX(0.8649);">Units:</div>
<div style="position:absolute;left:231.5px;top:78.7px;width:80.10000000000002px;height:13.899999999999991px;background:#fff;box-sizing:border-box;border:1px solid #e0e0e0;border-bottom-color:#cfcfcf;border-radius:2px"></div>
<svg style="left:301.6px;top:84.15px" width="8" height="5"><path d="M0.5 0.5 H7 L3.75 4 Z" fill="#111"/></svg>
<div class="t" style="left:235.7px;top:81.72px;font-size:8.6px;color:#1a1a1a;font-family:'Liberation Sans';font-weight:normal;transform:scaleX(0.8775);">inches</div>
<div class="t" style="left:322px;top:61.72px;font-size:8.6px;color:#1a1a1a;font-family:'Liberation Sans';font-weight:normal;transform:scaleX(0.8943);">Drawing scale:</div>
<div class="t" style="left:322px;top:81.22px;font-size:8.6px;color:#1a1a1a;font-family:'Liberation Sans';font-weight:normal;transform:scaleX(0.9145);">Number format:</div>
<div style="position:absolute;left:383.4px;top:60.7px;width:102.30000000000001px;height:13.299999999999997px;background:#fff;box-sizing:border-box;border:1px solid #e0e0e0;border-bottom-color:#cfcfcf;border-radius:2px"></div>
<svg style="left:475.7px;top:65.85px" width="8" height="5"><path d="M0.5 0.5 H7 L3.75 4 Z" fill="#111"/></svg>
<div class="t" style="left:389.7px;top:63.72px;font-size:8.6px;color:#1a1a1a;font-family:'Liberation Sans';font-weight:normal;transform:scaleX(0.9259);">1&quot; = 1&quot;  (Full Size)</div>
<div style="position:absolute;left:383.4px;top:78.6px;width:102.30000000000001px;height:13.400000000000006px;background:#fff;box-sizing:border-box;border:1px solid #e0e0e0;border-bottom-color:#cfcfcf;border-radius:2px"></div>
<svg style="left:475.7px;top:83.8px" width="8" height="5"><path d="M0.5 0.5 H7 L3.75 4 Z" fill="#111"/></svg>
<div class="t" style="left:387.5px;top:81.92px;font-size:8.6px;color:#1a1a1a;font-family:'Liberation Sans';font-weight:normal;transform:scaleX(0.7966);">N.xx3</div>
<div class="t" style="left:496.6px;top:61.42px;font-size:8.6px;color:#1a1a1a;font-family:'Liberation Sans';font-weight:normal;transform:scaleX(0.8782);">Coordinates:</div>
<div style="position:absolute;left:497.4px;top:78.6px;width:102.39999999999998px;height:13.400000000000006px;background:#fff;box-sizing:border-box;border:1px solid #e0e0e0;border-bottom-color:#cfcfcf;border-radius:2px"></div>
<svg style="left:589.8px;top:83.8px" width="8" height="5"><path d="M0.5 0.5 H7 L3.75 4 Z" fill="#111"/></svg>
<div class="t" style="left:500.8px;top:81.72px;font-size:8.6px;color:#1a1a1a;font-family:'Liberation Sans';font-weight:normal;transform:scaleX(0.9503);">X(+): right, Y(+): down</div>
<div style="position:absolute;left:607px;top:57px;width:1px;height:38px;background:#d8d8d8;"></div>
<svg style="left:614.3px;top:62.7px" width="10" height="10"><rect x="0" y="0" width="9.5" height="9.5" rx="2" fill="#0a5fc0"/><path d="M2.2 4.9 L4 6.6 L7.4 3" fill="none" stroke="#fff" stroke-width="1.1"/></svg>
<div class="t" style="left:625.5px;top:63.12px;font-size:8.6px;color:#1a1a1a;font-family:'Liberation Sans';font-weight:normal;transform:scaleX(0.8420);">Grids</div>
<svg style="left:614.3px;top:81.3px" width="10" height="10"><rect x="0.5" y="0.5" width="9" height="9" rx="2" fill="#fdfdfd" stroke="#8e8e8e" stroke-width="1"/></svg>
<div class="t" style="left:625.5px;top:81.72px;font-size:8.6px;color:#1a1a1a;font-family:'Liberation Sans';font-weight:normal;transform:scaleX(0.8188);">Guides</div>
<svg style="left:661px;top:61px" width="14" height="13"><rect x="1.5" y="1" width="10" height="5" fill="#1f5fd0"/><path d="M0 2.5H13M0 5H13M0 7.5H13M0 10H13" stroke="#555" stroke-width="0.6"/><rect x="1.5" y="1" width="10" height="5" fill="#1f5fd0"/><circle cx="6.5" cy="9" r="2.6" fill="#ef7a2a"/></svg>
<svg style="left:662px;top:80px" width="12" height="13"><path d="M1.5 0V12" stroke="#555" stroke-width="1.2"/><rect x="2" y="1" width="8.5" height="5.5" fill="#1f5fd0"/><circle cx="4.5" cy="9.3" r="2.5" fill="#ef7a2a"/></svg>
<svg style="left:686.4px;top:62.7px" width="10" height="10"><rect x="0" y="0" width="9.5" height="9.5" rx="2" fill="#0a5fc0"/><path d="M2.2 4.9 L4 6.6 L7.4 3" fill="none" stroke="#fff" stroke-width="1.1"/></svg>
<div class="t" style="left:697.7px;top:63.12px;font-size:8.6px;color:#1a1a1a;font-family:'Liberation Sans';font-weight:normal;transform:scaleX(0.8875);">Smart Snaps</div>
<div style="position:absolute;left:687px;top:77.5px;width:52.3px;height:15.7px;background:#fdfdfd;box-sizing:border-box;border:1px solid #d6d6d6;border-radius:2px;box-shadow:0 1px 0 #c4c4c4"></div>
<div class="t" style="left:696px;top:81.12px;font-size:8.6px;color:#1a1a1a;font-family:'Liberation Sans';font-weight:normal;transform:scaleX(0.8896);">Settings...</div>
<div style="position:absolute;left:746px;top:57px;width:1px;height:38px;background:#d8d8d8;"></div>
<svg style="left:753px;top:62.7px" width="10" height="10"><rect x="0" y="0" width="9.5" height="9.5" rx="2" fill="#0a5fc0"/><path d="M2.2 4.9 L4 6.6 L7.4 3" fill="none" stroke="#fff" stroke-width="1.1"/></svg>
<div class="t" style="left:764.4px;top:63.12px;font-size:8.6px;color:#1a1a1a;font-family:'Liberation Sans';font-weight:normal;transform:scaleX(0.8694);">Rulers</div>
<svg style="left:753px;top:81.3px" width="10" height="10"><rect x="0.5" y="0.5" width="9" height="9" rx="2" fill="#fdfdfd" stroke="#8e8e8e" stroke-width="1"/></svg>
<div class="t" style="left:764.4px;top:81.72px;font-size:8.6px;color:#1a1a1a;font-family:'Liberation Sans';font-weight:normal;transform:scaleX(0.8449);">Breaks</div>
<svg style="left:807.2px;top:62.7px" width="10" height="10"><rect x="0.5" y="0.5" width="9" height="9" rx="2" fill="#fdfdfd" stroke="#d2d2d2" stroke-width="1"/></svg>
<div class="t" style="left:819px;top:63.12px;font-size:8.6px;color:#a6a6a6;font-family:'Liberation Sans';font-weight:normal;transform:scaleX(0.8830);">Margins</div>
<svg style="left:807.2px;top:81.3px" width="10" height="10"><rect x="0.5" y="0.5" width="9" height="9" rx="2" fill="#fdfdfd" stroke="#d2d2d2" stroke-width="1"/></svg>
<div class="t" style="left:819px;top:81.72px;font-size:8.6px;color:#a6a6a6;font-family:'Liberation Sans';font-weight:normal;transform:scaleX(0.8829);">Print area</div>
<svg style="left:865.2px;top:62.7px" width="10" height="10"><rect x="0.5" y="0.5" width="9" height="9" rx="2" fill="#fdfdfd" stroke="#8e8e8e" stroke-width="1"/></svg>
<div class="t" style="left:876.8px;top:63.12px;font-size:8.6px;color:#1a1a1a;font-family:'Liberation Sans';font-weight:normal;transform:scaleX(0.9052);">Text boxes</div>
<svg style="left:865.2px;top:81.3px" width="10" height="10"><rect x="0" y="0" width="9.5" height="9.5" rx="2" fill="#0a5fc0"/><path d="M2.2 4.9 L4 6.6 L7.4 3" fill="none" stroke="#fff" stroke-width="1.1"/></svg>
<div class="t" style="left:876.8px;top:81.72px;font-size:8.6px;color:#1a1a1a;font-family:'Liberation Sans';font-weight:normal;transform:scaleX(0.9042);">Spelling errors</div>
<svg style="left:926.9px;top:62.7px" width="10" height="10"><rect x="0.5" y="0.5" width="9" height="9" rx="2" fill="#fdfdfd" stroke="#8e8e8e" stroke-width="1"/></svg>
<div class="t" style="left:938.4px;top:63.12px;font-size:8.6px;color:#1a1a1a;font-family:'Liberation Sans';font-weight:normal;transform:scaleX(0.9249);">Trim View</div>
<div style="position:absolute;left:982px;top:57px;width:1px;height:38px;background:#d8d8d8;"></div>
<svg style="left:989.3px;top:71.89999999999999px" width="10" height="10"><rect x="0.5" y="0.5" width="9" height="9" rx="2" fill="#fdfdfd" stroke="#8e8e8e" stroke-width="1"/></svg>
<div class="t" style="left:1001px;top:72.32px;font-size:8.6px;color:#1a1a1a;font-family:'Liberation Sans';font-weight:normal;transform:scaleX(0.8892);">Select Across layers</div>
<div class="t" style="left:4px;top:101.57px;font-size:8.3px;color:#222;font-family:'Liberation Sans';font-weight:normal;transform:scaleX(0.9355);">Selection tool or Direct Group Selection tool. Use the Selection tool to select an object or objects. To select multiple objects, Shift-click each object. To place an object in Edit mode, double-click the object with the Selection tool. To place multiple objects into Edit mode, Shift and double-click each object. Use the Direct Group Selection tool to select individual objects within a group without needing to</div>
<div class="t" style="left:4px;top:110.87px;font-size:8.3px;color:#222;font-family:'Liberation Sans';font-weight:normal;transform:scaleX(0.9350);">ungroup the objects by dragging your cursor over them.</div>
<div style="position:absolute;left:1398px;top:100px;width:13px;height:37px;background:#f0f0f0;"></div>
<svg style="left:1399px;top:102px" width="10" height="32"><path d="M1.5 6H8.5L5 2Z" fill="#a6a6a6"/><path d="M1.5 25H8.5L5 29Z" fill="#a6a6a6"/></svg>
<svg style="left:1416px;top:102px" width="9" height="9"><path d="M1.5 1.3L6.5 7.8M6.5 1.3L1.5 7.8" stroke="#3a3a44" stroke-width="1.5"/></svg>
<div style="position:absolute;left:44.5px;top:143px;width:1px;height:13px;background:#e2e2e2;"></div>
<div style="position:absolute;left:86px;top:143px;width:1px;height:13px;background:#e2e2e2;"></div>
<div style="position:absolute;left:155px;top:143px;width:1px;height:13px;background:#e2e2e2;"></div>
<div style="position:absolute;left:366px;top:143px;width:1px;height:13px;background:#e2e2e2;"></div>
<div class="t" style="left:4px;top:145.32px;font-size:8.6px;color:#222;font-family:'Liberation Sans';font-weight:normal;transform:scaleX(0.8722);">Brushes</div>
<div class="t" style="left:49.5px;top:145.32px;font-size:8.6px;color:#222;font-family:'Liberation Sans';font-weight:normal;transform:scaleX(0.8959);">Type</div>
<div class="t" style="left:90.8px;top:145.32px;font-size:8.6px;color:#222;font-family:'Liberation Sans';font-weight:normal;transform:scaleX(0.8896);">SpriteEffects</div>
<div class="t" style="left:160px;top:145.32px;font-size:8.6px;color:#222;font-family:'Liberation Sans';font-weight:normal;transform:scaleX(0.8537);">Navigator</div>
<div class="t" style="left:268px;top:145.32px;font-size:8.6px;color:#222;font-family:'Liberation Sans';font-weight:normal;transform:scaleX(0.8779);">Smart Mouse &amp; Guides</div>
<div class="t" style="left:371.2px;top:145.32px;font-size:8.6px;color:#222;font-family:'Liberation Sans';font-weight:normal;transform:scaleX(0.8530);">Align</div>
<div style="position:absolute;left:111px;top:34.5px;width:1px;height:19px;background:#9c9c9c;"></div>
<div style="position:absolute;left:182px;top:34.5px;width:1px;height:19px;background:#9c9c9c;"></div>
<div style="position:absolute;left:231px;top:34.5px;width:1px;height:19px;background:#9c9c9c;"></div>
<div style="position:absolute;left:324px;top:34.5px;width:1px;height:19px;background:#9c9c9c;"></div>
<div style="position:absolute;left:373px;top:34.5px;width:1px;height:19px;background:#9c9c9c;"></div>
<div style="position:absolute;left:421px;top:34.5px;width:1px;height:19px;background:#9c9c9c;"></div>
<div style="position:absolute;left:471px;top:34.5px;width:1px;height:19px;background:#9c9c9c;"></div>
<div style="position:absolute;left:586px;top:34.5px;width:1px;height:19px;background:#9c9c9c;"></div>
<div style="position:absolute;left:635px;top:34.5px;width:1px;height:19px;background:#9c9c9c;"></div>
<div style="position:absolute;left:684px;top:34.5px;width:1px;height:19px;background:#9c9c9c;"></div>
<svg style="left:2.6999999999999993px;top:37.0px" width="14" height="14" viewBox="0 0 14 14"><path d="M2.7 2.3H9L11.3 4.6V12.3H2.7Z" fill="none" stroke="#505663" stroke-width="1.2"/><path d="M8.8 2.3V4.8H11.3" fill="#505663" stroke="#505663" stroke-width="1"/></svg>
<svg style="left:25.0px;top:37.0px" width="14" height="14" viewBox="0 0 14 14"><path d="M2 4H8.5V5H12V12.5H2Z" fill="none" stroke="#505663" stroke-width="1.2"/><rect x="2" y="3.4" width="6.5" height="2" fill="#505663"/><path d="M9.5 1.8Q12 2 11.8 4.2" fill="none" stroke="#1f63e6" stroke-width="1.2"/><path d="M10 3.5H13.5L11.8 5.8Z" fill="#1f63e6"/></svg>
<svg style="left:47.0px;top:37.0px" width="14" height="14" viewBox="0 0 14 14"><rect x="2.3" y="2.6" width="9.6" height="10" rx="1" fill="none" stroke="#505663" stroke-width="1.2"/><rect x="3.8" y="7.2" width="6.6" height="5" fill="#505663"/><rect x="7.5" y="2.8" width="1.3" height="2.2" fill="#505663"/></svg>
<svg style="left:69.0px;top:37.0px" width="14" height="14" viewBox="0 0 14 14"><rect x="3.5" y="1.5" width="7" height="3.5" rx="0.6" fill="none" stroke="#505663" stroke-width="1.2"/><rect x="1" y="4.5" width="12" height="5.5" rx="1.2" fill="#505663"/><rect x="3.5" y="8.8" width="7" height="3.7" fill="#c9ccd4" stroke="#505663" stroke-width="1"/></svg>
<svg style="left:91.7px;top:37.0px" width="14" height="14" viewBox="0 0 14 14"><path d="M2.5 2.3H8.8L11.3 4.6V12.3H2.5Z" fill="none" stroke="#505663" stroke-width="1.1"/><circle cx="6.5" cy="7.5" r="2.3" fill="none" stroke="#1f63e6" stroke-width="1.3"/><path d="M8.2 9.2L11.8 12.6" stroke="#1f63e6" stroke-width="1.6"/></svg>
<svg style="left:118.5px;top:37.0px" width="14" height="14" viewBox="0 0 14 14"><path d="M5 1.5L8.8 9.5M9 1.5L5.2 9.5" stroke="#b7bbc9" stroke-width="1.1"/><circle cx="4.2" cy="11" r="1.7" fill="none" stroke="#b7bbc9" stroke-width="1.1"/><circle cx="9.8" cy="11" r="1.7" fill="none" stroke="#b7bbc9" stroke-width="1.1"/></svg>
<svg style="left:140.5px;top:37.0px" width="14" height="14" viewBox="0 0 14 14"><path d="M3.5 4V12.5H10" fill="none" stroke="#b7bbc9" stroke-width="1.2"/><path d="M5.5 2H10L11.5 3.5V10.5H5.5Z" fill="none" stroke="#b7bbc9" stroke-width="1.2"/></svg>
<svg style="left:163.0px;top:37.0px" width="14" height="14" viewBox="0 0 14 14"><path d="M4 2.5H2.5V12.5H6" fill="none" stroke="#505663" stroke-width="1.2"/><path d="M7 2.5H9V5" fill="none" stroke="#505663" stroke-width="1.2"/><rect x="4" y="1.3" width="4.5" height="2.2" fill="#505663"/><path d="M6.5 6H10.5L12.5 8V13H6.5Z" fill="#fff" stroke="#1f63e6" stroke-width="1.1"/><path d="M10.3 6V8.2H12.5" fill="#1f63e6"/></svg>
<svg style="left:189.0px;top:37.0px" width="14" height="14" viewBox="0 0 14 14"><path d="M4.8 4.5C9 3.8 11.5 6 12 10.5C10.8 8 8.5 7.3 4.8 7.8Z" fill="#505663"/><path d="M1.5 6.2L5.5 2.5V10Z" fill="#505663"/></svg>
<svg style="left:211.0px;top:37.0px" width="14" height="14" viewBox="0 0 14 14"><path d="M9.2 4.5C5 3.8 2.5 6 2 10.5C3.2 8 5.5 7.3 9.2 7.8Z" fill="#b7bbc9"/><path d="M12.5 6.2L8.5 2.5V10Z" fill="#b7bbc9"/></svg>
<svg style="left:238.0px;top:37.0px" width="14" height="14" viewBox="0 0 14 14"><path d="M7 1.5L12 4.3L7 7.1L2 4.3Z" fill="none" stroke="#b7bbc9" stroke-width="1"/><path d="M2.5 7.3L7 9.8L11.5 7.3M2.5 10L7 12.5L11.5 10" fill="none" stroke="#b7bbc9" stroke-width="1"/><path d="M2.5 5V10M11.5 5V10" stroke="#b7bbc9" stroke-width="0.8" stroke-dasharray="1 1"/></svg>
<svg style="left:260.0px;top:37.0px" width="14" height="14" viewBox="0 0 14 14"><path d="M7 1.5L12 4.3L7 7.1L2 4.3Z" fill="none" stroke="#b7bbc9" stroke-width="1"/><path d="M2.5 7.3L7 9.8L11.5 7.3M2.5 10L7 12.5L11.5 10" fill="none" stroke="#b7bbc9" stroke-width="1"/><path d="M3 4V11M11 4V11" stroke="#b7bbc9" stroke-width="0.8" stroke-dasharray="1 1"/></svg>
<svg style="left:282.0px;top:37.0px" width="14" height="14" viewBox="0 0 14 14"><path d="M2 6.5L7 9.3L12 6.5M2 9.3L7 12.1L12 9.3" fill="none" stroke="#b7bbc9" stroke-width="1"/><path d="M7 1.5L10 4.5H8V7.5H6V4.5H4Z" fill="#a3a9bb"/></svg>
<svg style="left:304.0px;top:37.0px" width="14" height="14" viewBox="0 0 14 14"><path d="M2 6.5L7 9.3L12 6.5M2 9.3L7 12.1L12 9.3" fill="none" stroke="#b7bbc9" stroke-width="1"/><path d="M7 8L10 5H8V1.5H6V5H4Z" fill="#a3a9bb"/></svg>
<svg style="left:331.0px;top:37.0px" width="14" height="14" viewBox="0 0 14 14"><path d="M7 1.5L12.5 4.5L7 7.5L1.5 4.5Z" fill="none" stroke="#b7bbc9" stroke-width="1"/><path d="M7 5L12.5 10L7 13L1.5 10Z" fill="#a3a9bb"/></svg>
<svg style="left:353.5px;top:37.0px" width="14" height="14" viewBox="0 0 14 14"><path d="M7 1.5L12.5 4.5L7 9L1.5 4.5Z" fill="#a3a9bb"/><path d="M1.5 9.5L7 12.5L12.5 9.5" fill="none" stroke="#b7bbc9" stroke-width="1"/></svg>
<svg style="left:380.0px;top:37.0px" width="14" height="14" viewBox="0 0 14 14"><rect x="3" y="3" width="3.5" height="3.5" fill="#a3a9bb"/><rect x="7.5" y="3" width="3.5" height="3.5" fill="#a3a9bb"/><rect x="3" y="7.5" width="3.5" height="3.5" fill="#a3a9bb"/><rect x="7.5" y="7.5" width="3.5" height="3.5" fill="#a3a9bb"/><path d="M1.5 1.5L3 3M12.5 1.5L11 3M1.5 12.5L3 11M12.5 12.5L11 11" stroke="#b7bbc9" stroke-width="0.8"/></svg>
<svg style="left:402.0px;top:37.0px" width="14" height="14" viewBox="0 0 14 14"><rect x="1.5" y="2" width="5" height="4.5" fill="#a3a9bb"/><rect x="7.5" y="2" width="5" height="4.5" fill="#a3a9bb"/><rect x="1.5" y="7.5" width="5" height="4.5" fill="#a3a9bb"/><rect x="7.5" y="7.5" width="5" height="4.5" fill="#a3a9bb"/></svg>
<svg style="left:428.5px;top:37.0px" width="14" height="14" viewBox="0 0 14 14"><rect x="2.5" y="6.2" width="9" height="6.3" rx="1" fill="none" stroke="#b7bbc9" stroke-width="1.2"/><path d="M4.5 6.2V4.3A2.5 2.5 0 0 1 9.5 4.3V6.2" fill="none" stroke="#b7bbc9" stroke-width="1.2"/></svg>
<svg style="left:451.0px;top:37.0px" width="14" height="14" viewBox="0 0 14 14"><rect x="1.5" y="6.5" width="8.5" height="6" rx="1" fill="none" stroke="#b7bbc9" stroke-width="1.2"/><path d="M7.8 6.5V4A2.3 2.3 0 0 1 12.4 4V5.5" fill="none" stroke="#b7bbc9" stroke-width="1.2"/></svg>
<svg style="left:477.5px;top:37.0px" width="14" height="14" viewBox="0 0 14 14"><path d="M1 3.5H13M3.5 1V13" stroke="#505663" stroke-width="1.2"/><ellipse cx="8" cy="9.3" rx="4" ry="2.4" fill="none" stroke="#1f63e6" stroke-width="1.3"/><circle cx="8" cy="9.3" r="1" fill="#1f63e6"/></svg>
<svg style="left:500.0px;top:37.0px" width="14" height="14" viewBox="0 0 14 14"><rect x="1.5" y="2.5" width="11" height="9.5" fill="#fff" stroke="#737987" stroke-width="1"/><rect x="1.5" y="2.2" width="11" height="1.8" fill="#1f63e6"/><path d="M2.5 4V12" stroke="#1f63e6" stroke-width="1.4" stroke-dasharray="1.5 0.6"/></svg>
<svg style="left:522.0px;top:37.0px" width="14" height="14" viewBox="0 0 14 14"><path d="M2 2H6.5V5.5A3 3 0 0 0 4 11.5H2Z" fill="#7b808c"/><circle cx="6" cy="9.5" r="2.6" fill="#505663"/><path d="M9.5 2L10.5 4.5H13L11 6L11.8 8.6L9.5 7.1L7.2 8.6L8 6L6 4.5H8.5Z" fill="#2b2f38"/></svg>
<svg style="left:544.5px;top:37.0px" width="14" height="14" viewBox="0 0 14 14"><path d="M2 10V2.5H12V10" fill="none" stroke="#505663" stroke-width="1.1"/><circle cx="7.2" cy="10.2" r="2.2" fill="none" stroke="#1f63e6" stroke-width="1.5" stroke-dasharray="1.2 0.6"/></svg>
<svg style="left:566.6px;top:37.0px" width="14" height="14" viewBox="0 0 14 14"><rect x="1.8" y="1.8" width="10.5" height="10.5" fill="none" stroke="#505663" stroke-width="1.1"/><rect x="1.8" y="1.8" width="10.5" height="1.5" fill="#505663"/><path d="M3.5 7H10.5" stroke="#1f63e6" stroke-width="1.1"/><path d="M3 7L5 5.3V8.7ZM11 7L9 5.3V8.7Z" fill="#1f63e6"/></svg>
<svg style="left:593.5px;top:37.0px" width="14" height="14" viewBox="0 0 14 14"><path d="M7.5 2H3A1 1 0 0 0 2 3V11.5A1 1 0 0 0 3 12.5H5.5M7.5 2L9.5 4" fill="none" stroke="#505663" stroke-width="1.2"/><path d="M5.5 12L6.5 9L11.5 4L13 5.5L8 10.5Z" fill="#1f63e6"/></svg>
<svg style="left:615.0px;top:37.0px" width="14" height="14" viewBox="0 0 14 14"><rect x="1.8" y="2" width="10.5" height="7.5" rx="1" fill="none" stroke="#b7bbc9" stroke-width="1.2"/><path d="M5.5 11.8H8.5" stroke="#b7bbc9" stroke-width="1"/></svg>
<svg style="left:642.0px;top:37.0px" width="14" height="14" viewBox="0 0 14 14"><path d="M3 2Q2 5 5 6Q8 4 9 7L11 10M4 12H12M5 6L8 9" fill="none" stroke="#b7bbc9" stroke-width="0.9"/></svg>
<svg style="left:664.0px;top:37.0px" width="14" height="14" viewBox="0 0 14 14"><path d="M2 1.5V12.3H13" fill="none" stroke="#505663" stroke-width="1.1"/><path d="M4.5 11V9.5M6.8 11V7.5M9 11V5M11.3 11V3" stroke="#505663" stroke-width="1.3"/></svg>
<svg style="left:691.0px;top:37.0px" width="14" height="14" viewBox="0 0 14 14"><path d="M1.5 4.5L4.5 1.5H12.5V9.5L9.5 12.5H1.5Z" fill="none" stroke="#505663" stroke-width="1"/><rect x="1.8" y="4.5" width="7.7" height="7.7" fill="#bcdcff" stroke="#505663" stroke-width="1"/><path d="M9.5 4.5L12.5 1.5" stroke="#505663" stroke-width="1"/><rect x="3" y="5.5" width="5.5" height="5.5" fill="#8ec6ff" opacity="0.8"/></svg>
<div style="position:absolute;left:1405px;top:35px;width:1px;height:20px;background:#b0b0b0;"></div>
<svg style="left:1411.0px;top:37.0px" width="14" height="14" viewBox="0 0 14 14"><path d="M7 0.8L12.6 4V10.2L7 13.4L1.4 10.2V4Z" fill="none" stroke="#d27a80" stroke-width="0.9"/><path d="M7 0.8V13.4M1.4 4L12.6 10.2M12.6 4L1.4 10.2M4 5.5H10L7 10Z" fill="none" stroke="#d99095" stroke-width="0.6"/></svg>
<svg style="left:0;top:0" width="1430" height="17"><path d="M1340.5 7.5H1348" stroke="#222" stroke-width="1"/><rect x="1374.2" y="5" width="6" height="6" rx="0.8" fill="none" stroke="#111" stroke-width="1.1"/><path d="M1376 3.8H1381A0.9 0.9 0 0 1 1382 4.8V9" fill="none" stroke="#111" stroke-width="0.9"/><path d="M1408.3 3.8L1415.5 11M1415.5 3.8L1408.3 11" stroke="#111" stroke-width="1.1"/></svg>
<svg style="left:0.2999999999999998px;top:1.7999999999999998px" width="12" height="12" viewBox="0 0 12 12"><path d="M6 0.8L10.8 3.4V8.6L6 11.2L1.2 8.6V3.4Z" fill="#dfe2e6"/><path d="M6 1.2L11 3.6V9.8L8.5 8.8L6 6Z" fill="#e7aab0"/><path d="M6 1V11M1.5 3.5L10.5 8.5M10.5 3.5L1.5 8.5" stroke="#c4c8cc" stroke-width="0.5"/></svg>
<svg style="left:5px;top:20px" width="12" height="10"><path d="M0.5 1.5H10M0.5 4.5H10M0.5 7.5H10" stroke="#8a8a8a" stroke-width="1"/></svg>
<div style="position:absolute;left:1389.8px;top:18.7px;width:12px;height:12.3px;background:#fff;box-shadow:0 0 0 0.5px #e8e8e8"></div>
<div style="position:absolute;left:1404px;top:18.7px;width:12px;height:12.3px;background:#fff;box-shadow:0 0 0 0.5px #e8e8e8"></div>
<div style="position:absolute;left:1418px;top:18.7px;width:12px;height:12.3px;background:#fff;box-shadow:0 0 0 0.5px #e8e8e8"></div>
<svg style="left:1390px;top:18px" width="40" height="14"><path d="M3.5 9.5H7.5" stroke="#44556a" stroke-width="1.3"/><rect x="17.5" y="5.5" width="4" height="4" fill="none" stroke="#7c8a9c" stroke-width="0.9"/><path d="M19 4H23V8" fill="none" stroke="#7c8a9c" stroke-width="0.9"/><path d="M31 5.5L35 9.5M35 5.5L31 9.5" stroke="#44556a" stroke-width="1.3"/></svg>
<div style="position:absolute;left:1189px;top:203px;width:49px;height:85px;background:#4a4a4a;"></div>
<div style="position:absolute;left:1190px;top:204px;width:47px;height:83px;background:#cfe2f5;"></div>
<div style="position:absolute;left:1190px;top:204px;width:47px;height:18px;background:linear-gradient(180deg,#93aed0,#b9d1ea);"></div>
<div style="position:absolute;left:1191px;top:222px;width:45px;height:64px;background:#f0f0f0;"></div>
<div style="position:absolute;left:1235px;top:222px;width:1.5px;height:64px;background:#a9d3f3;"></div>
<svg style="left:1225.2px;top:209px" width="9" height="9"><rect width="8.6" height="8" fill="#d44a4a"/><path d="M2.6 2.4L6 5.6M6 2.4L2.6 5.6" fill="none" stroke="#fff" stroke-width="1.3"/></svg>
<svg style="left:1212px;top:207px" width="11" height="11"><rect x="1.5" y="5" width="6" height="4.5" rx="0.8" fill="#4a4e58"/><path d="M5.5 5V3.2A1.8 1.8 0 0 1 9.1 3.2V4.5" fill="none" stroke="#4a4e58" stroke-width="1"/></svg>
<div style="position:absolute;left:1237px;top:203px;width:50px;height:324px;background:#4a4a4a;"></div>
<div style="position:absolute;left:1238px;top:204px;width:48px;height:322px;background:#cfe2f5;"></div>
<div style="position:absolute;left:1238px;top:204px;width:48px;height:18px;background:linear-gradient(180deg,#93aed0,#b9d1ea);"></div>
<div style="position:absolute;left:1239px;top:222px;width:46px;height:303px;background:#f0f0f0;"></div>
<div style="position:absolute;left:1284px;top:222px;width:1.5px;height:303px;background:#a9d3f3;"></div>
<svg style="left:1273.9px;top:209px" width="9" height="9"><rect width="8.6" height="8" fill="#d44a4a"/><path d="M2.6 2.4L6 5.6M6 2.4L2.6 5.6" fill="none" stroke="#fff" stroke-width="1.3"/></svg>
<svg style="left:1195.9px;top:227.2px" width="16" height="16" viewBox="0 0 16 16"><defs><linearGradient id="gb" x1="0" y1="0" x2="0" y2="1"><stop offset="0" stop-color="#4ea3e8"/><stop offset="1" stop-color="#1f74c8"/></linearGradient></defs><rect x="2" y="4.5" width="12" height="7.5" fill="url(#gb)"/></svg>
<svg style="left:1215px;top:227.2px" width="16" height="16" viewBox="0 0 16 16"><defs><linearGradient id="gb" x1="0" y1="0" x2="0" y2="1"><stop offset="0" stop-color="#4ea3e8"/><stop offset="1" stop-color="#1f74c8"/></linearGradient></defs><rect x="2.3" y="4.5" width="11.5" height="7.5" rx="2" fill="url(#gb)"/></svg>
<svg style="left:1195.9px;top:245.7px" width="16" height="16" viewBox="0 0 16 16"><defs><linearGradient id="gb" x1="0" y1="0" x2="0" y2="1"><stop offset="0" stop-color="#4ea3e8"/><stop offset="1" stop-color="#1f74c8"/></linearGradient></defs><rect x="2.5" y="4" width="11" height="9" fill="#fff" stroke="#555" stroke-width="0.8"/><path d="M5 4V13M7.5 4V13M10 4V13M2.5 7H13.5M2.5 10H13.5" stroke="#666" stroke-width="0.7"/></svg>
<svg style="left:1215px;top:245.7px" width="16" height="16" viewBox="0 0 16 16"><defs><linearGradient id="gb" x1="0" y1="0" x2="0" y2="1"><stop offset="0" stop-color="#4ea3e8"/><stop offset="1" stop-color="#1f74c8"/></linearGradient></defs><path d="M5 5L8 7H14V14H8L5 12Z" fill="#2d5f9e"/><rect x="3" y="2" width="8" height="8" fill="url(#gb)"/></svg>
<svg style="left:1195.9px;top:265.3px" width="16" height="16" viewBox="0 0 16 16"><defs><linearGradient id="gb" x1="0" y1="0" x2="0" y2="1"><stop offset="0" stop-color="#4ea3e8"/><stop offset="1" stop-color="#1f74c8"/></linearGradient></defs><path d="M8 1.5L9.9 6.1L14.6 6.3L10.9 9.3L12.2 14L8 11.3L3.8 14L5.1 9.3L1.4 6.3L6.1 6.1Z" fill="#2b8be0"/></svg>
<svg style="left:1215px;top:265.3px" width="16" height="16" viewBox="0 0 16 16"><defs><linearGradient id="gb" x1="0" y1="0" x2="0" y2="1"><stop offset="0" stop-color="#4ea3e8"/><stop offset="1" stop-color="#1f74c8"/></linearGradient></defs><path d="M8 2L14.2 6.5L11.8 13.5H4.2L1.8 6.5Z" fill="url(#gb)"/></svg>
<div style="position:absolute;left:1243.3px;top:225.3px;width:18.6px;height:18.6px;background:#cce6fb;box-sizing:border-box;border:1px solid #a8d4f8;border-radius:2px"></div>
<svg style="left:1244.4px;top:227.3px" width="16" height="16" viewBox="0 0 16 16"><defs><linearGradient id="gb" x1="0" y1="0" x2="0" y2="1"><stop offset="0" stop-color="#4ea3e8"/><stop offset="1" stop-color="#1f74c8"/></linearGradient></defs><path d="M6 4L6 13L8.2 10.8L10 14L11.2 13.4L9.5 10.3L12.5 10.2Z" fill="#1b1b1b"/></svg>
<div class="t" style="left:1266.1px;top:227.8px;font-size:14px;font-family:'Liberation Serif';font-weight:bold;color:#4a4e58">T</div>
<svg style="left:1244.4px;top:246.35000000000002px" width="16" height="16" viewBox="0 0 16 16"><defs><linearGradient id="gb" x1="0" y1="0" x2="0" y2="1"><stop offset="0" stop-color="#4ea3e8"/><stop offset="1" stop-color="#1f74c8"/></linearGradient></defs><rect x="1.5" y="4.5" width="12.5" height="7" fill="url(#gb)"/></svg>
<svg style="left:1263.3px;top:246.35000000000002px" width="16" height="16" viewBox="0 0 16 16"><defs><linearGradient id="gb" x1="0" y1="0" x2="0" y2="1"><stop offset="0" stop-color="#4ea3e8"/><stop offset="1" stop-color="#1f74c8"/></linearGradient></defs><path d="M3 3.5L13 13" stroke="#4a4e58" stroke-width="1.2"/></svg>
<svg style="left:1244.4px;top:265.40000000000003px" width="16" height="16" viewBox="0 0 16 16"><defs><linearGradient id="gb" x1="0" y1="0" x2="0" y2="1"><stop offset="0" stop-color="#4ea3e8"/><stop offset="1" stop-color="#1f74c8"/></linearGradient></defs><ellipse cx="8" cy="8" rx="6.3" ry="4" fill="url(#gb)"/></svg>
<svg style="left:1263.3px;top:265.40000000000003px" width="16" height="16" viewBox="0 0 16 16"><defs><linearGradient id="gb" x1="0" y1="0" x2="0" y2="1"><stop offset="0" stop-color="#4ea3e8"/><stop offset="1" stop-color="#1f74c8"/></linearGradient></defs><path d="M3 13L5 8L10 3L13 6L8 11Z" fill="#f0b040" stroke="#c07a20" stroke-width="0.8"/><path d="M10.5 2.5L13.5 5.5L14.5 3L13 1.5Z" fill="#a03020"/><path d="M3 13L7 9" stroke="#8a5a20" stroke-width="0.6"/></svg>
<svg style="left:1244.4px;top:284.45000000000005px" width="16" height="16" viewBox="0 0 16 16"><defs><linearGradient id="gb" x1="0" y1="0" x2="0" y2="1"><stop offset="0" stop-color="#4ea3e8"/><stop offset="1" stop-color="#1f74c8"/></linearGradient></defs><rect x="1.5" y="3" width="11" height="11" fill="none" stroke="#333" stroke-width="0.8" stroke-dasharray="1.2 1"/><path d="M3.5 12C4 8 7 6 9.5 7.5C9 10.5 6.5 12.5 3.5 12Z" fill="#d9773a"/><path d="M9 7L13 2.5" stroke="#2c6fc0" stroke-width="1.6"/></svg>
<svg style="left:1263.3px;top:284.45000000000005px" width="16" height="16" viewBox="0 0 16 16"><defs><linearGradient id="gb" x1="0" y1="0" x2="0" y2="1"><stop offset="0" stop-color="#4ea3e8"/><stop offset="1" stop-color="#1f74c8"/></linearGradient></defs><path d="M2.5 13C3 9.5 5.5 8 8 9C7.5 12 5 13.5 2.5 13Z" fill="#d9773a"/><path d="M7.5 8.5L13.5 2.5" stroke="#2c6fc0" stroke-width="1.8"/></svg>
<svg style="left:1244.4px;top:303.5px" width="16" height="16" viewBox="0 0 16 16"><defs><linearGradient id="gb" x1="0" y1="0" x2="0" y2="1"><stop offset="0" stop-color="#4ea3e8"/><stop offset="1" stop-color="#1f74c8"/></linearGradient></defs><path d="M3 14L9 7L10.5 8.5L4 14.5Z" fill="#eee" stroke="#777" stroke-width="0.7"/><path d="M8.5 6L12 2.5L14 4.5L10.5 8Z" fill="#c9953a"/><circle cx="12.5" cy="3.5" r="1.8" fill="#c9953a"/></svg>
<svg style="left:1263.3px;top:303.5px" width="16" height="16" viewBox="0 0 16 16"><defs><linearGradient id="gb" x1="0" y1="0" x2="0" y2="1"><stop offset="0" stop-color="#4ea3e8"/><stop offset="1" stop-color="#1f74c8"/></linearGradient></defs><path d="M3 13.5L9 7L10.5 8.5L4 14Z" fill="#f7c5a0" stroke="#c9773a" stroke-width="0.7"/><path d="M8.5 6L12 2.5L14 4.5L10.5 8Z" fill="#c9953a"/><circle cx="12.5" cy="3.5" r="1.8" fill="#c9953a"/><path d="M3 14.5H14" stroke="#f07030" stroke-width="1"/></svg>
<svg style="left:1244.4px;top:322.55px" width="16" height="16" viewBox="0 0 16 16"><defs><linearGradient id="gb" x1="0" y1="0" x2="0" y2="1"><stop offset="0" stop-color="#4ea3e8"/><stop offset="1" stop-color="#1f74c8"/></linearGradient></defs><path d="M1.5 5.5L5 2.5M11 13.5L14.5 10.5" stroke="#444" stroke-width="0.8"/><path d="M3.5 4.5L12.5 11.5" stroke="#2a7fe0" stroke-width="1.1"/><path d="M3.5 4L6 4.5L4.2 6.5ZM12.5 12L10 11.5L11.8 9.5Z" fill="#2a7fe0"/></svg>
<svg style="left:1263.3px;top:322.55px" width="16" height="16" viewBox="0 0 16 16"><defs><linearGradient id="gb" x1="0" y1="0" x2="0" y2="1"><stop offset="0" stop-color="#4ea3e8"/><stop offset="1" stop-color="#1f74c8"/></linearGradient></defs><rect x="2" y="6.5" width="8" height="6" fill="url(#gb)"/><path d="M9 7L13.5 2.5" stroke="#333" stroke-width="0.9"/><path d="M14 2L11.5 2.8L13.2 4.5Z" fill="#333"/></svg>
<svg style="left:1244.4px;top:341.6px" width="16" height="16" viewBox="0 0 16 16"><defs><linearGradient id="gb" x1="0" y1="0" x2="0" y2="1"><stop offset="0" stop-color="#4ea3e8"/><stop offset="1" stop-color="#1f74c8"/></linearGradient></defs><path d="M5 10L10 2.5L13.5 5L8.5 12Z" fill="#3a8ee0"/><path d="M5 10L8.5 12L7 13L4.5 11.5Z" fill="#222"/><path d="M4.5 11.5L7 13L4.5 14Z" fill="#f07030"/><path d="M2.5 15H13" stroke="#f07030" stroke-width="1"/></svg>
<svg style="left:1263.3px;top:341.6px" width="16" height="16" viewBox="0 0 16 16"><defs><linearGradient id="gb" x1="0" y1="0" x2="0" y2="1"><stop offset="0" stop-color="#4ea3e8"/><stop offset="1" stop-color="#1f74c8"/></linearGradient></defs><path d="M3.5 14.5V7A4.5 4.5 0 0 1 12.5 7V14.5L11 13L9.5 14.5L8 13L6.5 14.5L5 13Z" fill="#2486d6"/><circle cx="6.5" cy="7" r="1.2" fill="#fff"/><circle cx="9.5" cy="7" r="1.2" fill="#fff"/></svg>
<svg style="left:1244.4px;top:360.65px" width="16" height="16" viewBox="0 0 16 16"><defs><linearGradient id="gb" x1="0" y1="0" x2="0" y2="1"><stop offset="0" stop-color="#4ea3e8"/><stop offset="1" stop-color="#1f74c8"/></linearGradient></defs><path d="M2 13L4 10L12.5 4L14 6.5L5.5 12Z" fill="#f4c020"/><path d="M2 13L4 10L5.5 12Z" fill="#aaa"/><circle cx="8.8" cy="7.3" r="0.9" fill="#223"/></svg>
<svg style="left:1263.3px;top:360.65px" width="16" height="16" viewBox="0 0 16 16"><defs><linearGradient id="gb" x1="0" y1="0" x2="0" y2="1"><stop offset="0" stop-color="#4ea3e8"/><stop offset="1" stop-color="#1f74c8"/></linearGradient></defs><circle cx="9.5" cy="10" r="3.5" fill="none" stroke="#333" stroke-width="0.9"/><path d="M7 7.5L3 3.5" stroke="#333" stroke-width="0.8"/><path d="M2.5 2.5L5.5 3.2L3.2 5.5Z" fill="#333"/></svg>
<svg style="left:1244.4px;top:379.70000000000005px" width="16" height="16" viewBox="0 0 16 16"><defs><linearGradient id="gb" x1="0" y1="0" x2="0" y2="1"><stop offset="0" stop-color="#4ea3e8"/><stop offset="1" stop-color="#1f74c8"/></linearGradient></defs><path d="M2.5 14V6L5 3.5V14Z" fill="#2d82d8"/><path d="M2 14.5H13" stroke="#2d82d8" stroke-width="1.4"/><circle cx="9" cy="8.5" r="3.8" fill="#e8e8e8" stroke="#777" stroke-width="0.8"/><path d="M6 12L12 6" stroke="#555" stroke-width="0.8"/></svg>
<svg style="left:1263.3px;top:379.70000000000005px" width="16" height="16" viewBox="0 0 16 16"><defs><linearGradient id="gb" x1="0" y1="0" x2="0" y2="1"><stop offset="0" stop-color="#4ea3e8"/><stop offset="1" stop-color="#1f74c8"/></linearGradient></defs><rect x="3.5" y="4" width="9" height="8.5" rx="1.5" fill="#4a4e58"/><rect x="5" y="5.5" width="6" height="3" fill="#ccd"/><path d="M4 11H6M6 11H8M8 11H10M10 11H12" stroke-width="2"/><path d="M4 11H6" stroke="#f33" stroke-width="2"/><path d="M6 11H8" stroke="#3c3" stroke-width="2"/><path d="M8 11H10" stroke="#33f" stroke-width="2"/><path d="M10 11H12" stroke="#c3c" stroke-width="2"/></svg>
<svg style="left:1244.4px;top:398.75px" width="16" height="16" viewBox="0 0 16 16"><defs><linearGradient id="gb" x1="0" y1="0" x2="0" y2="1"><stop offset="0" stop-color="#4ea3e8"/><stop offset="1" stop-color="#1f74c8"/></linearGradient></defs><circle cx="6.5" cy="6.5" r="4.5" fill="#e8f2fc" stroke="#6aa8e0" stroke-width="0.9"/><rect x="6" y="7" width="7.5" height="6.5" fill="#e8f2fc" stroke="#6aa8e0" stroke-width="0.9"/><path d="M5 4L11 12" stroke="#444" stroke-width="0.7"/></svg>
<svg style="left:1263.3px;top:398.75px" width="16" height="16" viewBox="0 0 16 16"><defs><linearGradient id="gb" x1="0" y1="0" x2="0" y2="1"><stop offset="0" stop-color="#4ea3e8"/><stop offset="1" stop-color="#1f74c8"/></linearGradient></defs><path d="M5 3.5H9.5V7.5H13V13H6" fill="none" stroke="#333" stroke-width="0.9" stroke-dasharray="1.5 0.8"/><path d="M2.5 13L6 11V15Z" fill="#222"/></svg>
<svg style="left:1244.4px;top:417.8px" width="16" height="16" viewBox="0 0 16 16"><defs><linearGradient id="gb" x1="0" y1="0" x2="0" y2="1"><stop offset="0" stop-color="#4ea3e8"/><stop offset="1" stop-color="#1f74c8"/></linearGradient></defs><path d="M4 9V5.5Q4 4.5 5 4.8L5.5 8V3.5Q6 2.5 7 3L7.3 8V3Q8 2 9 3L9.2 8V4Q10 3 10.8 4.2V10Q10.5 13.5 7.5 14Q4.5 13.5 4 11L2.5 8.5Q2.5 7.5 3.5 8Z" fill="#f7cba8" stroke="#e0a070" stroke-width="0.5"/></svg>
<svg style="left:1263.3px;top:417.8px" width="16" height="16" viewBox="0 0 16 16"><defs><linearGradient id="gb" x1="0" y1="0" x2="0" y2="1"><stop offset="0" stop-color="#4ea3e8"/><stop offset="1" stop-color="#1f74c8"/></linearGradient></defs><circle cx="7" cy="7" r="4.3" fill="#cde6fb" stroke="#3a86d6" stroke-width="1.3"/><path d="M10 10L13.8 13.8" stroke="#e08a30" stroke-width="2"/></svg>
<div style="position:absolute;left:1243px;top:436px;width:38px;height:1px;background:#c0c0c0;"></div>
<div style="position:absolute;left:1248px;top:443px;width:28px;height:1px;background:#222;"></div>
<svg style="left:1250px;top:453px" width="30" height="6"><path d="M0.5 3H5.5M7 3H9.8M11.3 3H16.3M17.8 3H20.6" stroke="#4a4e58" stroke-width="2.2"/></svg>
<svg style="left:1250px;top:467px" width="25" height="10"><path d="M3 5H22" stroke="#4a4e58" stroke-width="1.3"/><path d="M1 5L5.5 2V8ZM23.5 5L19 2V8Z" fill="#4a4e58"/><circle cx="12.3" cy="5" r="1.8" fill="#f0f0f0" stroke="#4a4e58" stroke-width="1"/></svg>
<svg style="left:1242.3px;top:483.2px" width="16" height="16" viewBox="0 0 16 16"><defs><linearGradient id="gb" x1="0" y1="0" x2="0" y2="1"><stop offset="0" stop-color="#4ea3e8"/><stop offset="1" stop-color="#1f74c8"/></linearGradient></defs><path d="M3.5 12.5L5 8.5L10 3L12.5 5.5L7.5 11Z" fill="#fff" stroke="#555" stroke-width="0.9"/><path d="M2 14H11" stroke="#88a8d8" stroke-width="1"/></svg>
<div style="position:absolute;left:1260.3px;top:484.5px;width:18.6px;height:14.1px;background:#000;"></div>
<svg style="left:1242.3px;top:502.5px" width="16" height="16" viewBox="0 0 16 16"><defs><linearGradient id="gb" x1="0" y1="0" x2="0" y2="1"><stop offset="0" stop-color="#4ea3e8"/><stop offset="1" stop-color="#1f74c8"/></linearGradient></defs><path d="M2.5 9L7 4.5L11 8.5L6.5 13Z" fill="#3a3e48"/><path d="M6 3V7" stroke="#3a3e48" stroke-width="1.2"/><path d="M10.5 9Q13 11 12 14L10 12Z" fill="#f08030"/></svg>
<div style="position:absolute;left:1260.3px;top:503.6px;width:18.6px;height:14.4px;background:#fff;box-sizing:border-box;border:1px solid #d8d8d8"></div>
<svg style="left:1260px;top:503px" width="20" height="16"><path d="M1 1L18.5 14.5" stroke="#222" stroke-width="1"/></svg>
<div style="position:absolute;left:1417px;top:156px;width:13px;height:600px;background:#f0f0f0;"></div>
<div style="position:absolute;left:1417px;top:244px;width:13px;height:1px;background:#dcdcdc;"></div>
<div style="position:absolute;left:1417px;top:334px;width:13px;height:1px;background:#dcdcdc;"></div>
<div style="position:absolute;left:1417px;top:420px;width:13px;height:1px;background:#dcdcdc;"></div>
<div style="position:absolute;left:1417px;top:476px;width:13px;height:1px;background:#dcdcdc;"></div>
<div class="t" style="left:1428.2px;top:163.5px;font-size:9.6px;color:#2a2a2a;font-family:'Liberation Sans';transform:rotate(90deg) scaleX(0.9987);">Canvas Assistant</div>
<div class="t" style="left:1428.2px;top:252px;font-size:9.6px;color:#2a2a2a;font-family:'Liberation Sans';transform:rotate(90deg) scaleX(1.0066);">Document Layout</div>
<div class="t" style="left:1428.2px;top:342px;font-size:9.6px;color:#2a2a2a;font-family:'Liberation Sans';transform:rotate(90deg) scaleX(1.0130);">Page Navigator</div>
<div class="t" style="left:1428.2px;top:424px;font-size:9.6px;color:#2a2a2a;font-family:'Liberation Sans';transform:rotate(90deg) scaleX(1.0338);">Flowchart</div>
<div class="t" style="left:1428.2px;top:479.6px;font-size:9.6px;color:#2a2a2a;font-family:'Liberation Sans';transform:rotate(90deg) scaleX(1.1737);">Symbol Library</div>
<div style="position:absolute;left:1412px;top:170px;width:1px;height:572px;background:#e2e2e2;"></div>
<div style="position:absolute;left:1403px;top:431px;width:3px;height:134px;background:#858585;border-radius:1.5px"></div>
<div style="position:absolute;left:1412px;top:439px;width:5px;height:34px;background:#f8f8f8;box-sizing:border-box;border:1px solid #d0d0d0;border-right:none"></div>
<div style="position:absolute;left:0px;top:742px;width:1412px;height:14px;background:#f0f0f0;"></div>
<svg style="left:0;top:0" width="1430" height="767"><line x1="249" y1="741.5" x2="1162" y2="741.5" stroke="#777" stroke-dasharray="1 2"/></svg>
<svg style="left:2px;top:744px" width="10" height="10"><circle cx="4" cy="4" r="2.8" fill="none" stroke="#777" stroke-width="1"/><path d="M6 6L9 9" stroke="#777" stroke-width="1.4"/><path d="M2.5 4H5.5" stroke="#777" stroke-width="0.8"/></svg>
<div style="position:absolute;left:14px;top:743.5px;width:55px;height:12px;background:#fff;box-sizing:border-box;border:1px solid #d4d4d4;border-radius:1px"></div>
<div class="t" style="left:17px;top:745.92px;font-size:8.6px;color:#2a2a4a;font-family:'Liberation Sans';font-weight:normal;transform:scaleX(0.8917);">200.0%</div>
<svg style="left:60px;top:746px" width="8" height="6"><path d="M0.8 1L3.8 4L6.8 1" fill="none" stroke="#666" stroke-width="0.9"/></svg>
<svg style="left:72px;top:744px" width="10" height="10"><circle cx="4" cy="4" r="2.8" fill="none" stroke="#777" stroke-width="1"/><path d="M6 6L9 9" stroke="#777" stroke-width="1.4"/><path d="M2.5 4H5.5M4 2.5V5.5" stroke="#777" stroke-width="0.8"/></svg>
<div style="position:absolute;left:84px;top:743px;width:1px;height:13px;background:#d0d0d0;"></div>
<svg style="left:87px;top:743.5px" width="10" height="12"><path d="M1 1H5.5L8.5 4V10.5H1Z" fill="#fff" stroke="#666" stroke-width="1"/><path d="M5.5 1V4H8.5" fill="none" stroke="#666"/></svg>
<svg style="left:99px;top:745px" width="10" height="8"><path d="M4.5 0.5L1 4L4.5 7.5ZM8.5 0.5L5 4L8.5 7.5Z" fill="#777"/></svg>
<svg style="left:111px;top:745px" width="10" height="8"><path d="M1 0.5L4.5 4L1 7.5ZM5 0.5L8.5 4L5 7.5Z" fill="#777"/></svg>
<div style="position:absolute;left:122px;top:743px;width:56px;height:12.5px;background:#fff;box-sizing:border-box;border:1px solid #d4d4d4;border-radius:1px"></div>
<div class="t" style="left:125px;top:745.72px;font-size:8.6px;color:#2a2a4a;font-family:'Liberation Sans';font-weight:normal;transform:scaleX(0.8719);">Sheet #1</div>
<svg style="left:168px;top:746px" width="8" height="6"><path d="M0.8 1L3.8 4L6.8 1" fill="none" stroke="#666" stroke-width="0.9"/></svg>
<div style="position:absolute;left:181px;top:743px;width:1px;height:13px;background:#d0d0d0;"></div>
<svg style="left:183px;top:744px" width="11" height="11"><rect x="1" y="1" width="5.5" height="6.5" fill="none" stroke="#888" stroke-width="0.9"/><rect x="3.5" y="3" width="6" height="7" fill="#f0f0f0" stroke="#888" stroke-width="0.9"/></svg>
<svg style="left:190px;top:744px" width="54" height="10"><path d="M7.8 0.8V8.6" stroke="#555" stroke-width="1.4"/><path d="M13.8 0.8L8.6 4.7L13.8 8.6Z" fill="#555"/><path d="M25 1.2L19.5 4.7L25 8.2Z" fill="#555"/><path d="M30.7 1.2L36.2 4.7L30.7 8.2Z" fill="#555"/><path d="M43 0.8L48.2 4.7L43 8.6Z" fill="#555"/><path d="M49 0.8V8.6" stroke="#555" stroke-width="1.4"/></svg>
<svg style="left:236px;top:741px" width="70" height="16"><path d="M6 1.5L13 13.5H62L63 1.5" fill="#fff" stroke="#d8d8d8" stroke-width="1"/><path d="M0 1.5H6" stroke="none"/></svg>
<div class="t" style="left:253px;top:744.17px;font-size:8.3px;color:#333;font-family:'Liberation Sans';font-weight:normal;transform:scaleX(0.8546);">Layer #1</div>
<div style="position:absolute;left:377px;top:743px;width:1px;height:13px;background:#d0d0d0;"></div>
<div style="position:absolute;left:379px;top:743px;width:1px;height:13px;background:#d0d0d0;"></div>
<div style="position:absolute;left:702px;top:748px;width:370px;height:3px;background:#858585;border-radius:1.5px"></div>
<svg style="left:1399px;top:744px" width="12" height="12"><path d="M3 11L11 3M6 11L11 6M9 11L11 9" stroke="#888" stroke-width="0.8"/></svg>
<div style="position:absolute;left:0px;top:756px;width:1430px;height:11px;background:#f0f0f0;"></div>
<div style="position:absolute;left:0px;top:756px;width:1430px;height:1px;background:#d6d6d6;"></div>
<div style="position:absolute;left:240px;top:757px;width:1px;height:10px;background:#d0d0d0;"></div>
<div style="position:absolute;left:479px;top:757px;width:1px;height:10px;background:#d0d0d0;"></div>
<div style="position:absolute;left:716px;top:757px;width:1px;height:10px;background:#d0d0d0;"></div>
<div style="position:absolute;left:956px;top:757px;width:1px;height:10px;background:#d0d0d0;"></div>
<div style="position:absolute;left:1193px;top:757px;width:1px;height:10px;background:#d0d0d0;"></div>
<div class="t" style="left:241.7px;top:759.66px;font-size:8.2px;color:#222;font-family:'Liberation Sans';font-weight:normal;transform:scaleX(0.9613);">X: -2.275 in Y: 2.994 in</div>
<div class="t" style="left:719.5px;top:759.66px;font-size:8.2px;color:#222;font-family:'Liberation Sans';font-weight:normal;transform:scaleX(0.9001);">No Selection</div>
<div class="t" style="left:1196px;top:759.66px;font-size:8.2px;color:#222;font-family:'Liberation Sans';font-weight:normal;transform:scaleX(0.9457);">No image edit data</div>
</body></html>
